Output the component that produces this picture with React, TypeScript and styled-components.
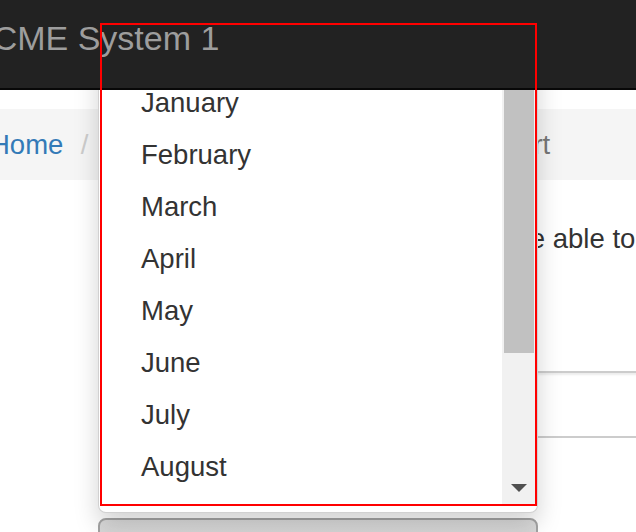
import React from "react";
import styled, { createGlobalStyle } from "styled-components";

const GlobalStyle = createGlobalStyle`
    html, body {
        margin: 0;
        padding: 0;
        background: #fff;
    }
    body {
        font-family: "Liberation Sans", Arial, sans-serif;
        color: #333;
        overflow: hidden;
    }
`;

const Page = styled.div`
    position: relative;
    width: 636px;
    height: 532px;
    overflow: hidden;
`;

const Navbar = styled.header`
    position: relative;
    z-index: 2;
    height: 88px;
    background: #222;
    border-bottom: 2px solid #080808;
`;

const Brand = styled.a`
    display: block;
    margin-left: -30px;
    padding-top: 21px;
    font-size: 34px;
    line-height: 35px;
    color: #9d9d9d;
    white-space: nowrap;
    text-decoration: none;
`;

const Main = styled.main`
    padding-top: 19px;
`;

const Breadcrumb = styled.ol`
    display: flex;
    align-items: center;
    height: 71px;
    margin: 0;
    padding: 0;
    list-style: none;
    background: #f5f5f5;
    font-size: 27.5px;
    line-height: 71px;
    white-space: nowrap;

    & > li:first-child {
        margin-left: -10px;
    }
`;

const Crumb = styled.li<{ $active?: boolean }>`
    color: ${(p) => (p.$active ? "#777" : "#337ab7")};
`;

const CrumbSep = styled.li`
    padding: 0 17.4px;
    color: #ccc;
`;

const FormColumn = styled.section`
    padding-left: 98px;
`;

const Lead = styled.p`
    margin: 38px 0 0;
    padding-left: 10px;
    font-size: 27.5px;
    line-height: 41px;
    white-space: nowrap;
`;

const TextBox = styled.div`
    box-sizing: border-box;
    margin-top: 112px;
    width: 600px;
    height: 67px;
    border: 2px solid #ccc;
    border-right: none;
    border-radius: 8px 0 0 8px;
    background: #fff;
    box-shadow: inset 0 2px 2px rgba(0, 0, 0, 0.075);
`;

const SelectWrap = styled.div`
    position: relative;
    width: 440px;
    margin-top: 80px;
`;

const SelectButton = styled.div`
    box-sizing: border-box;
    height: 70px;
    border: 2px solid #a4a4a4;
    border-radius: 8px;
    background: linear-gradient(#dcdcdc, #c6c6c6);
`;

const Dropdown = styled.div`
    position: absolute;
    left: 0;
    bottom: calc(100% + 5px);
    box-sizing: border-box;
    width: 440px;
    height: 492px;
    padding: 1px 0 6px 1px;
    border: 1px solid rgba(0, 0, 0, 0.18);
    border-radius: 8px;
    background: #fff;
    box-shadow: 0 12px 24px rgba(0, 0, 0, 0.175);
`;

const ScrollArea = styled.div`
    position: relative;
    display: flex;
    width: 437px;
    height: 483px;
    overflow: hidden;
`;

const OptionList = styled.ul`
    flex: 1;
    margin: 0;
    padding: 2px 0 0;
    list-style: none;
`;

const Option = styled.li`
    height: 52px;
    padding-left: 41px;
    font-size: 27.5px;
    line-height: 52px;
    color: #333;
    white-space: nowrap;
`;

const Scrollbar = styled.div`
    display: flex;
    flex-direction: column;
    width: 35px;
    background: #f1f1f1;
`;

const ScrollButton = styled.div`
    display: flex;
    align-items: center;
    justify-content: center;
    height: 33px;
    padding-right: 2px;
`;

const Arrow = styled.span<{ $down?: boolean }>`
    width: 0;
    height: 0;
    margin-top: ${(p) => (p.$down ? "-3px" : "0")};
    border-left: 8px solid transparent;
    border-right: 8px solid transparent;
    ${(p) =>
        p.$down
            ? "border-top: 8px solid #505050;"
            : "border-bottom: 8px solid #505050;"}
`;

const Thumb = styled.div`
    width: 30px;
    height: 297px;
    margin-left: 2px;
    background: #c1c1c1;
`;

const Track = styled.div`
    flex: 1;
`;

const Highlight = styled.div`
    position: absolute;
    inset: 0;
    z-index: 3;
    border: 2px solid #ff0000;
    pointer-events: none;
`;

const MONTHS = [
    "January",
    "February",
    "March",
    "April",
    "May",
    "June",
    "July",
    "August",
    "September",
    "October",
    "November",
    "December",
];

export default function App() {
    return (
        <Page>
            <GlobalStyle />
            <Navbar>
                <Brand href="#">ACME System 1</Brand>
            </Navbar>
            <Main>
                <Breadcrumb>
                    <Crumb>Home</Crumb>
                    <CrumbSep>/</CrumbSep>
                    <Crumb>Reports</Crumb>
                    <CrumbSep>/</CrumbSep>
                    <Crumb $active>Add New Monthly Report</Crumb>
                </Breadcrumb>
                <FormColumn>
                    <Lead>
                        With the form below you will now be able to create a
                        new report.
                    </Lead>
                    <TextBox />
                    <SelectWrap>
                        <SelectButton />
                        <Dropdown>
                            <ScrollArea>
                                <OptionList>
                                    <Option>Select a month</Option>
                                    {MONTHS.map((m) => (
                                        <Option key={m}>{m}</Option>
                                    ))}
                                </OptionList>
                                <Scrollbar>
                                    <ScrollButton>
                                        <Arrow />
                                    </ScrollButton>
                                    <Thumb />
                                    <Track />
                                    <ScrollButton>
                                        <Arrow $down />
                                    </ScrollButton>
                                </Scrollbar>
                                <Highlight />
                            </ScrollArea>
                        </Dropdown>
                    </SelectWrap>
                </FormColumn>
            </Main>
        </Page>
    );
}
